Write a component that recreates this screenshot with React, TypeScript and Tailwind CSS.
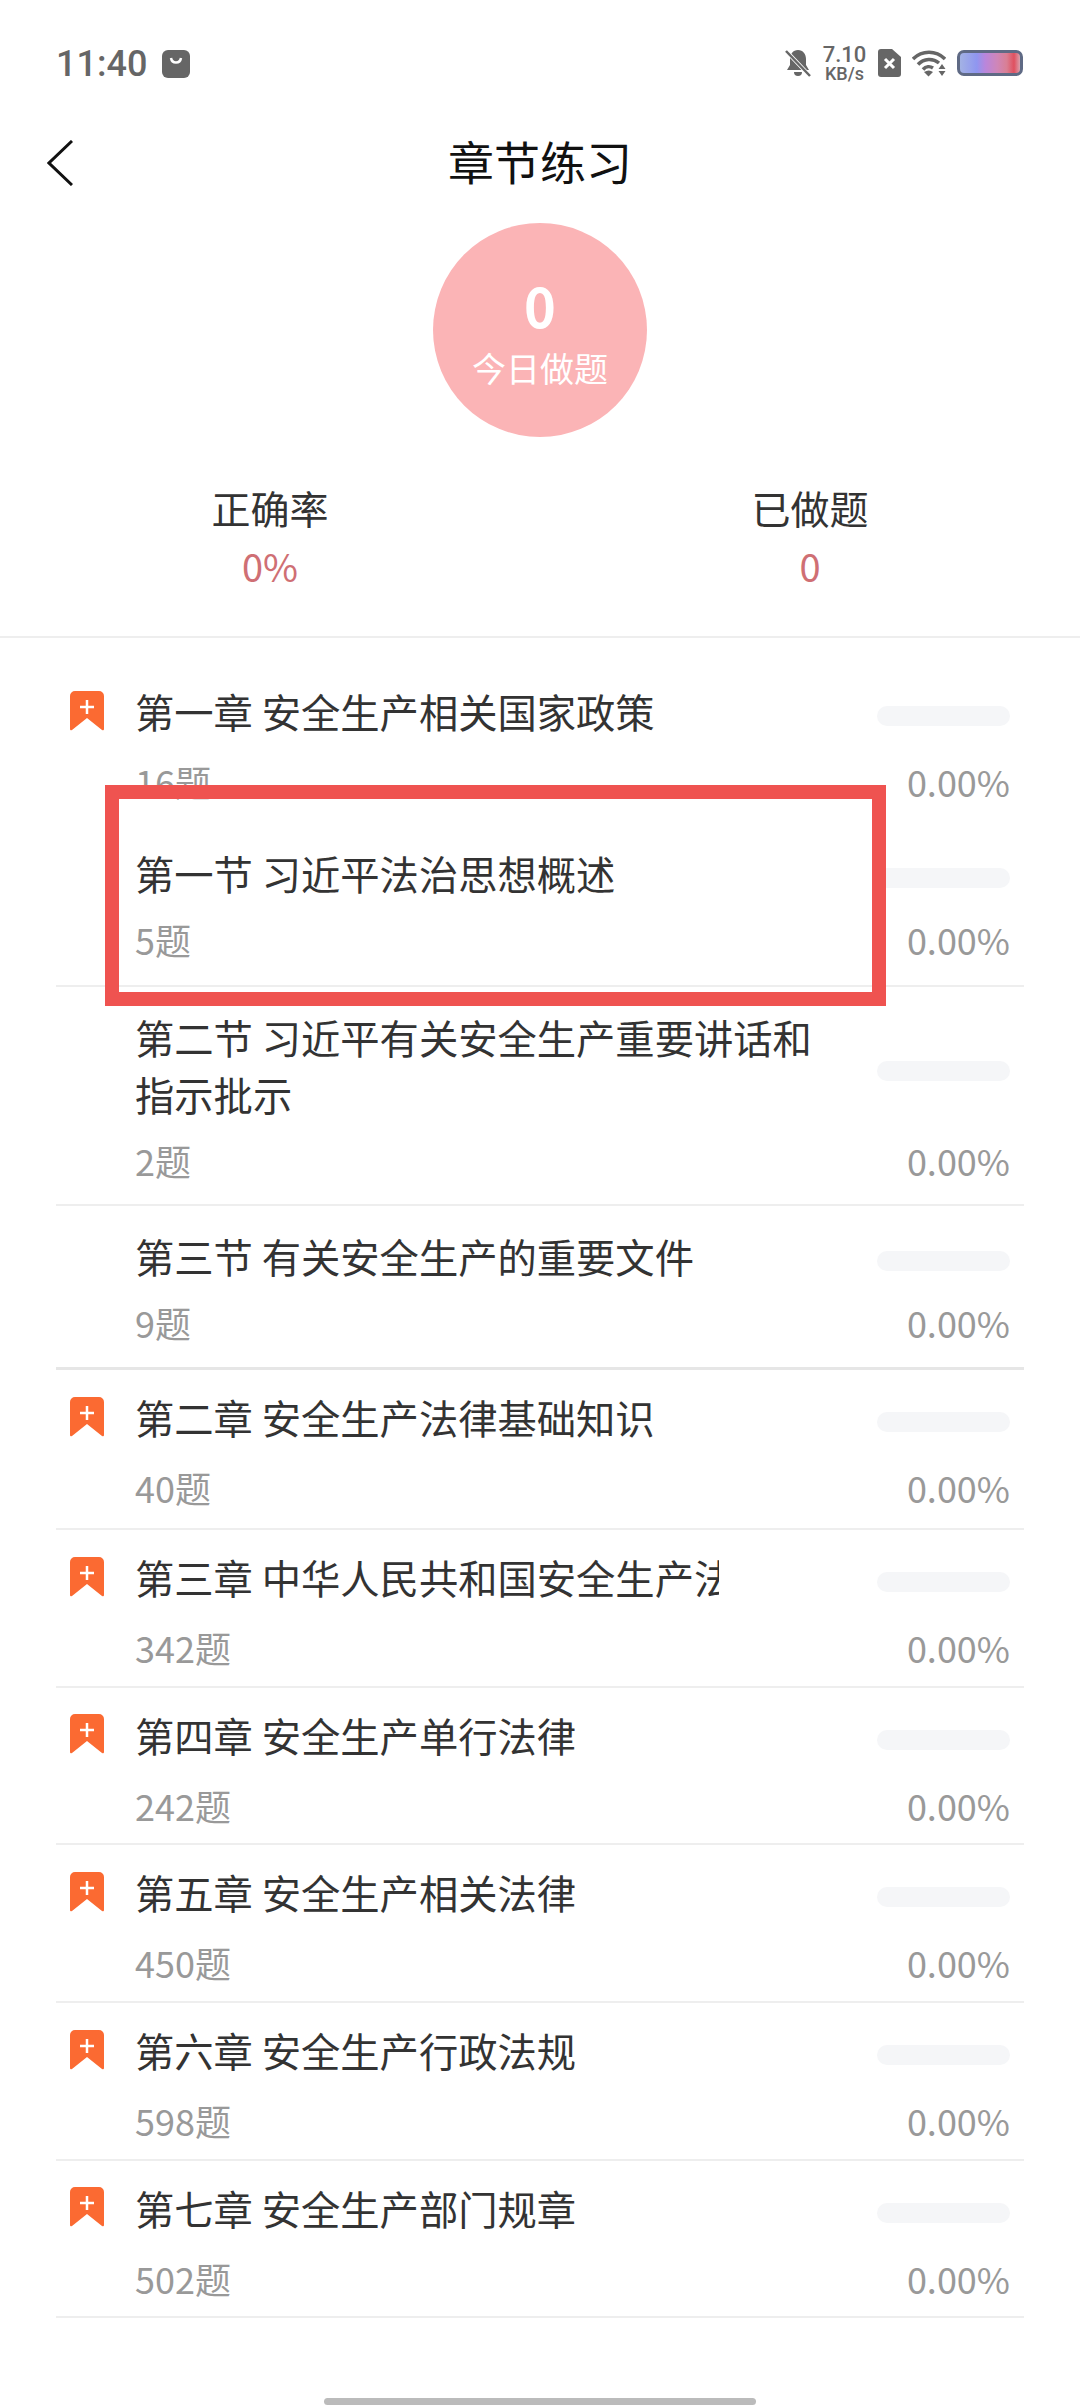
import { clsx } from 'clsx';

type Row = {
  title: string;
  count: string;
  chapter?: boolean;
  divider?: 'none' | 'thick';
  // bottom padding differs a little row to row in the original
  pad: string;
};

const CHAPTER_PAD = 'pb-[18.7px]';

const ROWS: Row[] = [
  { title: '第一章 安全生产相关国家政策', count: '16题', chapter: true, divider: 'none', pad: 'pb-[20px]' },
  { title: '第一节 习近平法治思想概述', count: '5题', pad: 'pb-[26px]' },
  { title: '第二节 习近平有关安全生产重要讲话和指示批示', count: '2题', pad: 'pb-[24px]' },
  { title: '第三节 有关安全生产的重要文件', count: '9题', divider: 'thick', pad: 'pb-[25px]' },
  { title: '第二章 安全生产法律基础知识', count: '40题', chapter: true, pad: 'pb-[21px]' },
  { title: '第三章 中华人民共和国安全生产法', count: '342题', chapter: true, pad: CHAPTER_PAD },
  { title: '第四章 安全生产单行法律', count: '242题', chapter: true, pad: CHAPTER_PAD },
  { title: '第五章 安全生产相关法律', count: '450题', chapter: true, pad: CHAPTER_PAD },
  { title: '第六章 安全生产行政法规', count: '598题', chapter: true, pad: CHAPTER_PAD },
  { title: '第七章 安全生产部门规章', count: '502题', chapter: true, pad: CHAPTER_PAD },
];

function Bookmark() {
  return (
    <svg width="34" height="40" viewBox="0 0 34 40" className="shrink-0">
      <path d="M5 0h24a5 5 0 0 1 5 5v33q0 2-2 1L17 27 2 39q-2 1-2-1V5a5 5 0 0 1 5-5z" fill="#fb6a32" />
      <path d="M17 9v14M10 16h14" stroke="#fff" strokeWidth="2.5" />
    </svg>
  );
}

function StatusIcons() {
  return (
    <div className="flex items-center">
      {/* muted bell */}
      <svg width="26" height="28" viewBox="0 0 26 28" className="ml-[1px]">
        <path d="M13 1c5 0 8 4 8 9v6l3 5H2l3-5v-6c0-5 3-9 8-9z" fill="#666" />
        <path d="M9 23h8a4 4 0 0 1-8 0z" fill="#666" />
        <path d="M1 2l24 25" stroke="#fff" strokeWidth="4" />
        <path d="M1 2l24 25" stroke="#666" strokeWidth="2.5" />
      </svg>
      <div className="ml-[13px] flex w-[41px] flex-col items-center font-['Roboto',sans-serif] font-medium text-[#666]">
        <span className="text-[22px] leading-[21px]">7.10</span>
        <span className="text-[18px] leading-[17px]">KB/s</span>
      </div>
      {/* sim without service */}
      <svg width="23" height="28" viewBox="0 0 23 28" className="ml-[13px]">
        <path d="M3 0h11l9 8v17a3 3 0 0 1-3 3H3a3 3 0 0 1-3-3V3a3 3 0 0 1 3-3z" fill="#666" />
        <path d="M7 10l9 9M16 10l-9 9" stroke="#fff" strokeWidth="3" />
      </svg>
      <svg width="34" height="27" viewBox="0 0 34 27" className="ml-[11px]">
        <path d="M1 9C10 0 24 0 33 9" stroke="#666" strokeWidth="3.5" fill="none" />
        <path d="M6 14.500C12 8 21 8 27 13" stroke="#666" strokeWidth="3.5" fill="none" />
        <path d="M11 19.500C14 16 18 16 21 18" stroke="#666" strokeWidth="3.500" fill="none" />
        <path d="M12 22q5-3 9 0l-4.500 4.500z" fill="#666" />
        <path d="M30 14l3.500 5h-7zM30 26l-3.500-5h7z" fill="#666" />
      </svg>
      <div className="ml-[11px] h-[26px] w-[66px] rounded-[7px] border-[3px] border-[#5f6a85] bg-[linear-gradient(90deg,#a3b2e4_0%,#8f96f0_28%,#b986dc_42%,#cf86b8_62%,#d97f94_78%,#e0505f_90%,#d9a0ad_100%)]" />
    </div>
  );
}

function ChapterRow({ row }: { row: Row }) {
  const { title, count, chapter, divider, pad } = row;

  return (
    <div
      className={clsx(
        'flex flex-col border-b-2',
        chapter ? 'pt-[18px]' : 'pt-[21px]',
        pad,
        divider === 'none' && 'border-transparent',
        divider === 'thick' && 'border-b-[3px] border-[#e6e6e6]',
        !divider && 'border-[#eeeeee]',
      )}
    >
      <div className="flex items-center pr-[14px]">
        <div className="flex w-[79px] shrink-0 pl-[14px]">{chapter && <Bookmark />}</div>
        <div
          className={clsx(
            'text-[39.3px] leading-[57px] text-[#333]',
            chapter ? 'w-[584px] overflow-hidden whitespace-nowrap' : 'w-[700px]',
          )}
        >
          {title}
        </div>
        <div className="mt-[11px] ml-auto h-[20px] w-[133px] shrink-0 rounded-full bg-[#f5f6f8]" />
      </div>
      <div
        className={clsx(
          'flex items-center justify-between pr-[14px] pl-[79px] text-[36px] leading-[40px] text-[#999]',
          chapter ? 'mt-[22px]' : 'mt-[18px]',
        )}
      >
        <span>{count}</span>
        <span>0.00%</span>
      </div>
    </div>
  );
}

export default function App() {
  return (
    <div
      lang="zh-CN"
      className="relative h-[2408px] w-[1080px] overflow-hidden bg-white font-['Noto_Sans_CJK_SC','Noto_Sans',sans-serif]"
    >
      {/* Status bar */}
      <div className="flex h-[126px] items-center justify-between pr-[57px] pl-[56px]">
        <div className="flex items-center pt-[2px]">
          <span className="font-['Roboto',sans-serif] text-[36px] leading-none font-medium text-[#666]">11:40</span>
          <svg width="28" height="28" viewBox="0 0 28 28" className="ml-[15px]">
            <rect width="28" height="28" rx="6" fill="#666" />
            <path d="M9 8c1 6 9 6 10 0" stroke="#fff" strokeWidth="2.500" fill="none" />
          </svg>
        </div>
        <StatusIcons />
      </div>

      {/* Nav bar */}
      <div className="relative flex h-[74px] items-center justify-center">
        <svg width="26" height="46" viewBox="0 0 26 46" className="absolute left-[47px]">
          <path d="M25 1L2 23l23 22" stroke="#111" strokeWidth="3" fill="none" />
        </svg>
        <h1 className="-mt-[6px] text-[46px] leading-none font-normal text-[#111]">章节练习</h1>
      </div>

      {/* Today's count */}
      <div className="mx-auto mt-[23px] flex h-[214px] w-[214px] flex-col items-center rounded-full bg-[#fbb4b6] text-white">
        <span className="mt-[48px] text-[54px] leading-[68px] font-bold">0</span>
        <span className="mt-[7px] text-[34px] leading-[44px]">今日做题</span>
      </div>

      {/* Stats */}
      <div className="grid grid-cols-2 border-b-2 border-[#eeeeee] pt-[45px] pb-[47px] text-center">
        <div>
          <div className="text-[39px] leading-[50px] text-[#333]">正确率</div>
          <div className="mt-[11px] text-[38px] leading-[46px] text-[#cf6f74]">0%</div>
        </div>
        <div>
          <div className="text-[39px] leading-[50px] text-[#333]">已做题</div>
          <div className="mt-[11px] text-[38px] leading-[46px] text-[#cf6f74]">0</div>
        </div>
      </div>

      {/* Chapter list */}
      <div className="mx-[56px] mt-[26px]">
        {ROWS.map((row) => (
          <ChapterRow key={row.title} row={row} />
        ))}
      </div>

      {/* Home indicator */}
      <div className="absolute bottom-[3px] left-[324px] h-[7px] w-[432px] rounded-full bg-[#bbbbbb]" />

      {/* Highlight box drawn over the screenshot */}
      <div className="absolute top-[785px] left-[105px] h-[221px] w-[781px] border-[14px] border-[#ef5350]" />
    </div>
  );
}
